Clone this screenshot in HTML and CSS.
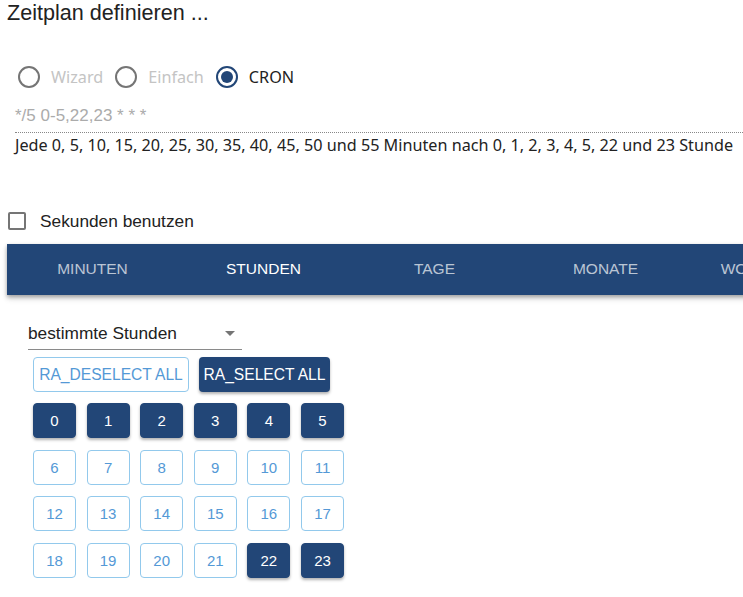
FILE: index.html
```html
<!DOCTYPE html>
<html lang="de">
<head>
<meta charset="utf-8">
<link rel="stylesheet" href="styles.css">
</head>
<body>
<div class="page">
  <div class="title">Zeitplan definieren ...</div>
  <div class="radios">
    <label class="radio"><span class="circle"></span><span class="rlabel muted">Wizard</span></label>
    <label class="radio"><span class="circle"></span><span class="rlabel muted">Einfach</span></label>
    <label class="radio checked"><span class="circle"><span class="dot"></span></span><span class="rlabel">CRON</span></label>
  </div>
  <div class="cron-input">*/5 0-5,22,23 * * *</div>
  <div class="desc">Jede 0, 5, 10, 15, 20, 25, 30, 35, 40, 45, 50 und 55 Minuten nach 0, 1, 2, 3, 4, 5, 22 und 23 Stunde</div>
  <div class="check-row"><span class="checkbox"></span><span class="clabel">Sekunden benutzen</span></div>
  <div class="tabs">
    <div class="tab">MINUTEN</div>
    <div class="tab active">STUNDEN</div>
    <div class="tab">TAGE</div>
    <div class="tab">MONATE</div>
    <div class="tab">WOCHENTAGE</div>
  </div>
  <div class="panel">
    <div class="select"><span>bestimmte Stunden</span><span class="arrow"></span></div>
    <div class="actions">
      <button class="btn outline">RA_DESELECT ALL</button>
      <button class="btn filled">RA_SELECT ALL</button>
    </div>
    <div class="hours">
      <button class="hour on">0</button>
      <button class="hour on">1</button>
      <button class="hour on">2</button>
      <button class="hour on">3</button>
      <button class="hour on">4</button>
      <button class="hour on">5</button>
      <button class="hour">6</button>
      <button class="hour">7</button>
      <button class="hour">8</button>
      <button class="hour">9</button>
      <button class="hour">10</button>
      <button class="hour">11</button>
      <button class="hour">12</button>
      <button class="hour">13</button>
      <button class="hour">14</button>
      <button class="hour">15</button>
      <button class="hour">16</button>
      <button class="hour">17</button>
      <button class="hour">18</button>
      <button class="hour">19</button>
      <button class="hour">20</button>
      <button class="hour">21</button>
      <button class="hour on">22</button>
      <button class="hour on">23</button>
    </div>
  </div>
</div>
</body>
</html>
```
FILE: styles.css
```css
html, body {
  margin: 0;
  padding: 0;
  overflow: hidden;
  background: #fff;
}
.page {
  width: 743px;
  height: 597px;
  overflow: hidden;
  font-family: "Liberation Sans", Arial, sans-serif;
  color: #222;
}
.title {
  font-size: 21.6px;
  line-height: 26px;
  padding-left: 7px;
  color: #222;
}
.radios {
  margin-top: 39px;
  height: 24px;
  display: flex;
  align-items: center;
  padding-left: 18px;
  font-family: "Noto Sans", "Open Sans", sans-serif;
  font-size: 16.2px;
}
.radio {
  display: flex;
  align-items: center;
  margin-right: 12px;
}
.circle {
  width: 22px;
  height: 22px;
  box-sizing: border-box;
  border: 2px solid #757575;
  border-radius: 50%;
  display: flex;
  align-items: center;
  justify-content: center;
}
.checked .circle {
  border-color: #224677;
}
.dot {
  width: 12px;
  height: 12px;
  border-radius: 50%;
  background: #224677;
}
.rlabel {
  margin-left: 11px;
  color: #222;
}
.rlabel.muted {
  color: #c4c4c4;
}
.cron-input {
  margin-top: 14px;
  margin-left: 15px;
  height: 30px;
  box-sizing: border-box;
  border-bottom: 1px dotted #888;
  line-height: 26px;
  font-size: 17px;
  color: #ababab;
}
.desc {
  margin-top: 2px;
  padding-left: 15px;
  line-height: 20px;
  font-family: "Noto Sans", "Open Sans", sans-serif;
  font-size: 16.2px;
  color: #222;
  white-space: nowrap;
}
.check-row {
  margin-top: 56px;
  height: 20px;
  display: flex;
  align-items: center;
  padding-left: 8px;
}
.checkbox {
  width: 18px;
  height: 18px;
  box-sizing: border-box;
  border: 2px solid #757575;
  border-radius: 2px;
}
.clabel {
  margin-left: 14px;
  font-size: 17.3px;
  color: #222;
}
.tabs {
  margin-top: 13px;
  margin-left: 7px;
  height: 51px;
  width: 855px;
  display: flex;
  background: #224677;
  box-shadow: 0 2px 4px rgba(0,0,0,0.3), 0 4px 6px rgba(0,0,0,0.12);
}
.tab {
  flex: 0 0 171px;
  display: flex;
  align-items: center;
  justify-content: center;
  font-size: 15.5px;
  color: rgba(255,255,255,0.7);
  white-space: nowrap;
  padding-bottom: 2px;
}
.tab.active {
  color: #fff;
}
.panel {
  padding-left: 28px;
  padding-top: 23px;
}
.select {
  width: 214px;
  height: 32px;
  box-sizing: border-box;
  border-bottom: 1px solid #8a8a8a;
  display: flex;
  align-items: center;
  justify-content: space-between;
  font-size: 17.3px;
  color: #222;
  padding-right: 7px;
  padding-bottom: 0;
}
.arrow {
  width: 0;
  height: 0;
  border-left: 5px solid transparent;
  border-right: 5px solid transparent;
  border-top: 5px solid #757575;
}
.actions {
  margin-top: 7px;
  margin-left: 5px;
  display: flex;
  gap: 10px;
}
.btn {
  height: 35px;
  box-sizing: border-box;
  border-radius: 4px;
  font-family: "Liberation Sans", Arial, sans-serif;
  font-size: 15.6px;
  padding: 0;
  white-space: nowrap;
  cursor: pointer;
}
.btn.outline {
  width: 156px;
  background: #fff;
  border: 1px solid #92c9ec;
  color: #5499d6;
}
.btn.filled {
  width: 131px;
  background: #224677;
  border: none;
  color: #fff;
  box-shadow: 0 2px 3px rgba(0,0,0,0.3);
}
.hours {
  margin-top: 11px;
  margin-left: 5px;
  display: grid;
  grid-template-columns: repeat(6, 43px);
  column-gap: 10.6px;
  row-gap: 11.7px;
}
.hour {
  height: 35px;
  box-sizing: border-box;
  border-radius: 4px;
  border: 1px solid #92c9ec;
  background: #fff;
  color: #5499d6;
  font-family: "Liberation Sans", Arial, sans-serif;
  font-size: 15px;
  padding: 0;
}
.hour.on {
  background: #224677;
  border-color: #224677;
  color: #fff;
  box-shadow: 0 2px 3px rgba(0,0,0,0.3);
}
```
